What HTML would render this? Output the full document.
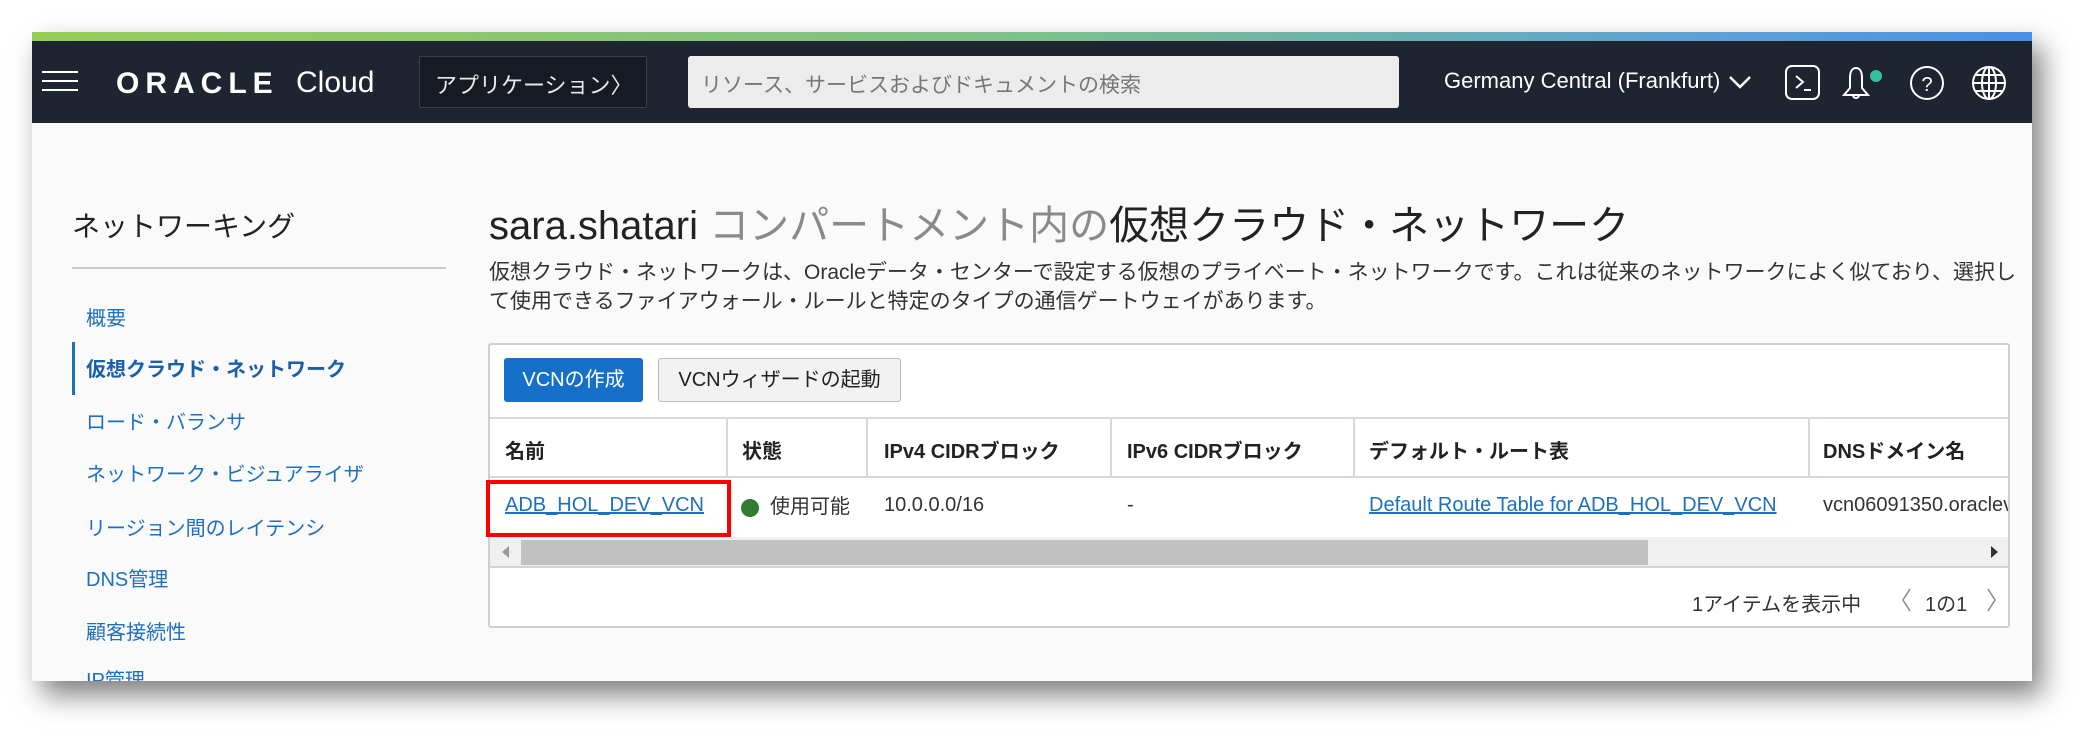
<!DOCTYPE html>
<html><head><meta charset="utf-8">
<style>
*{margin:0;padding:0;box-sizing:border-box}
body{width:2097px;height:746px;background:#fff;position:relative;overflow:hidden;font-family:"Liberation Sans","Noto Sans CJK JP",sans-serif;}
.a{position:absolute;white-space:nowrap}
#win{position:absolute;left:32px;top:32px;width:2000px;height:649px;background:#fafafa;box-shadow:10px 14px 26px rgba(0,0,0,0.5);overflow:hidden}
.side{color:#1f6fbf;font-size:20px;left:86px}
.hd{font-size:20px;font-weight:bold;color:#222}
.vl{position:absolute;top:418px;width:2px;height:59px;background:#d5d9dd}
</style></head><body>
<div id="win">
 <div class="a" style="left:0;top:0;width:2000px;height:9px;background:linear-gradient(90deg,#97cc5a,#7cc08a 50%,#5d9fd8 85%,#4a90e2)"></div>
 <div class="a" style="left:0;top:9px;width:2000px;height:82px;background:#1e2531"></div>
</div>
<!-- nav -->
<div class="a" style="left:42px;top:71px;width:36px;height:2px;background:#fff"></div>
<div class="a" style="left:42px;top:80px;width:36px;height:2px;background:#fff"></div>
<div class="a" style="left:42px;top:89px;width:36px;height:2px;background:#fff"></div>
<div class="a" style="left:116px;top:67px;font-size:30px;font-weight:bold;color:#fff;letter-spacing:6px">ORACLE</div>
<div class="a" style="left:296px;top:66px;font-size:30px;color:#fff">Cloud</div>
<div class="a" style="left:419px;top:56px;width:228px;height:52px;background:#161b23;border:1px solid #3a414c;border-radius:2px"></div>
<div class="a" style="left:435px;top:68px;font-size:22px;color:#e8e8e8">アプリケーション〉</div>
<div class="a" style="left:688px;top:56px;width:711px;height:52px;background:#ececec;border-radius:3px"></div>
<div class="a" style="left:701px;top:69px;font-size:21px;color:#777">リソース、サービスおよびドキュメントの検索</div>
<div class="a" style="left:1444px;top:68px;font-size:22px;color:#fff">Germany Central (Frankfurt)</div>
<svg class="a" style="left:1728px;top:74px" width="24" height="16"><path d="M2 3 L12 13 L22 3" stroke="#fff" stroke-width="2.5" fill="none"/></svg>
<svg class="a" style="left:1784px;top:64px" width="240" height="38">
 <rect x="2" y="2" width="33" height="33" rx="6" stroke="#fff" stroke-width="2" fill="none"/>
 <path d="M12 12 L19 18 L12 24 M20 26 H27" stroke="#fff" stroke-width="2" fill="none"/>
 <path d="M72 4 C68 4 66 8 66 14 V24 L60 31 H84 L78 24 V14 C78 8 76 4 72 4 Z M69 31 A3 3 0 0 0 75 31" stroke="#fff" stroke-width="2" fill="none"/>
 <circle cx="92" cy="12" r="6" fill="#2fc29c"/>
 <circle cx="143" cy="19" r="16" stroke="#fff" stroke-width="2" fill="none"/>
 <text x="143" y="27" font-size="20" fill="#fff" text-anchor="middle" font-family="Liberation Sans">?</text>
 <circle cx="205" cy="19" r="16" stroke="#fff" stroke-width="2" fill="none"/>
 <ellipse cx="205" cy="19" rx="7" ry="16" stroke="#fff" stroke-width="2" fill="none"/>
 <path d="M189 19 H221 M192 11 H218 M192 27 H218 M205 3 V35" stroke="#fff" stroke-width="2" fill="none"/>
</svg>
<!-- sidebar -->
<div class="a" style="left:72px;top:205px;font-size:28px;color:#222">ネットワーキング</div>
<div class="a" style="left:72px;top:267px;width:374px;height:2px;background:#c8ccd0"></div>
<div class="a side" style="top:302px">概要</div>
<div class="a" style="left:72px;top:342px;width:3px;height:53px;background:#1f6fbf"></div>
<div class="a side" style="top:353px;font-weight:bold;color:#1a5fae">仮想クラウド・ネットワーク</div>
<div class="a side" style="top:406px">ロード・バランサ</div>
<div class="a side" style="top:458px">ネットワーク・ビジュアライザ</div>
<div class="a side" style="top:512px">リージョン間のレイテンシ</div>
<div class="a side" style="top:563px">DNS管理</div>
<div class="a side" style="top:616px">顧客接続性</div>
<div class="a side" style="top:664px;height:17px;overflow:hidden">IP管理</div>
<!-- heading -->
<div class="a" style="left:489px;top:193px;font-size:40px;color:#222">sara.shatari <span style="color:#8a8a8a">コンパートメント内の</span>仮想クラウド・ネットワーク</div>
<div class="a" style="left:489px;top:258px;font-size:21px;color:#333;line-height:29px">仮想クラウド・ネットワークは、Oracleデータ・センターで設定する仮想のプライベート・ネットワークです。これは従来のネットワークによく似ており、選択し<br>て使用できるファイアウォール・ルールと特定のタイプの通信ゲートウェイがあります。</div>
<!-- panel -->
<div class="a" style="left:488px;top:343px;width:1522px;height:285px;background:#fff;border:2px solid #cbd0d5;border-radius:3px"></div>
<div class="a" style="left:504px;top:358px;width:139px;height:44px;background:#1670c9;border-radius:3px;color:#fff;font-size:20px;line-height:44px;text-align:center">VCNの作成</div>
<div class="a" style="left:658px;top:358px;width:243px;height:44px;background:#f2f2f2;border:1px solid #bbb;border-radius:3px;color:#222;font-size:20px;line-height:42px;text-align:center">VCNウィザードの起動</div>
<div class="a" style="left:490px;top:417px;width:1518px;height:2px;background:#d5d9dd"></div>
<div class="a" style="left:490px;top:476px;width:1518px;height:2px;background:#d5d9dd"></div>
<div class="vl" style="left:726px"></div><div class="vl" style="left:866px"></div><div class="vl" style="left:1110px"></div><div class="vl" style="left:1353px"></div><div class="vl" style="left:1808px"></div>
<div class="a hd" style="left:505px;top:435px">名前</div>
<div class="a hd" style="left:742px;top:435px">状態</div>
<div class="a hd" style="left:884px;top:435px">IPv4 CIDRブロック</div>
<div class="a hd" style="left:1127px;top:435px">IPv6 CIDRブロック</div>
<div class="a hd" style="left:1369px;top:435px">デフォルト・ルート表</div>
<div class="a hd" style="left:1823px;top:435px">DNSドメイン名</div>
<div class="a" style="left:486px;top:480px;width:245px;height:57px;border:4px solid #f00"></div>
<div class="a" style="left:505px;top:494px;font-size:20px;color:#1f6fbf;text-decoration:underline">ADB_HOL_DEV_VCN</div>
<div class="a" style="left:741px;top:499px;width:18px;height:18px;border-radius:50%;background:#2e7d32"></div>
<div class="a" style="left:770px;top:490px;font-size:20px;color:#333">使用可能</div>
<div class="a" style="left:884px;top:494px;font-size:20px;color:#333">10.0.0.0/16</div>
<div class="a" style="left:1127px;top:494px;font-size:20px;color:#333">-</div>
<div class="a" style="left:1369px;top:494px;font-size:20px;color:#1f6fbf;text-decoration:underline">Default Route Table for ADB_HOL_DEV_VCN</div>
<div class="a" style="left:1823px;top:494px;width:185px;overflow:hidden;font-size:20px;color:#333">vcn06091350.oraclevcn.com</div>
<div class="a" style="left:490px;top:537px;width:1518px;height:31px;background:#f0f0f0;border-bottom:2px solid #d0d4d8"></div>
<div class="a" style="left:521px;top:540px;width:1127px;height:25px;background:#c1c1c1"></div>
<svg class="a" style="left:500px;top:545px" width="12" height="14"><path d="M9 1 L2 7 L9 13Z" fill="#999"/></svg>
<svg class="a" style="left:1988px;top:545px" width="12" height="14"><path d="M3 1 L10 7 L3 13Z" fill="#333"/></svg>
<div class="a" style="left:1692px;top:588px;font-size:20px;color:#333">1アイテムを表示中</div>
<svg class="a" style="left:1900px;top:586px" width="110" height="28"><path d="M10 3 L3 14 L10 25" stroke="#888" stroke-width="1.5" fill="none"/><path d="M88 3 L95 14 L88 25" stroke="#888" stroke-width="1.5" fill="none"/></svg>
<div class="a" style="left:1925px;top:588px;font-size:20px;color:#333">1の1</div>
</body></html>
